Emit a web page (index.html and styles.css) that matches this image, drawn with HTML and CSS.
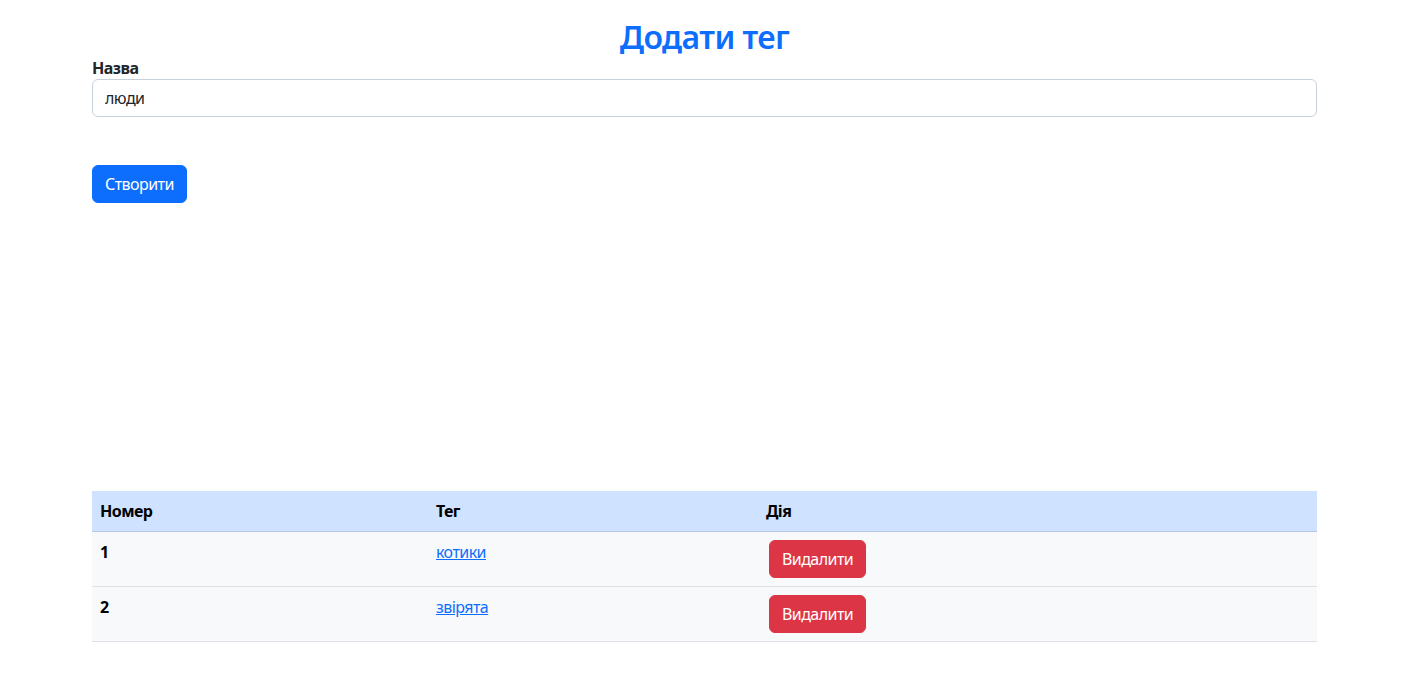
FILE: index.html
```html
<!DOCTYPE html>
<html lang="uk">
<head>
<meta charset="utf-8">
<title>Додати тег</title>
<link rel="stylesheet" href="styles.css">
</head>
<body>
<main class="container">
  <h2 class="title">Додати тег</h2>
  <form class="tag-form">
    <label class="form-label" for="name">Назва</label>
    <input class="form-control" id="name" type="text" value="люди">
    <button class="btn btn-primary" type="button">Створити</button>
  </form>
  <table class="table">
    <thead>
      <tr><th class="col-num">Номер</th><th class="col-tag">Тег</th><th>Дія</th></tr>
    </thead>
    <tbody>
      <tr><th>1</th><td><a href="#">котики</a></td><td><button class="btn btn-danger" type="button">Видалити</button></td></tr>
      <tr><th>2</th><td><a href="#">звірята</a></td><td><button class="btn btn-danger" type="button">Видалити</button></td></tr>
    </tbody>
  </table>
</main>
</body>
</html>
```
FILE: styles.css
```css
* { box-sizing: border-box; }
body {
  margin: 0;
  font-family: "Noto Sans", "Open Sans", sans-serif;
  font-size: 16px;
  line-height: 1.5;
  letter-spacing: -0.035em;
  color: #212529;
  background: #fff;
}
.container {
  width: 1225px;
  margin: 0 0 0 92px;
}
.title {
  margin: 18px 0 0;
  font-size: 32px;
  line-height: 38px;
  font-weight: 600;
  color: #0d6efd;
  text-align: center;
}
.tag-form {
  display: flex;
  flex-direction: column;
  align-items: flex-start;
}
.form-label {
  font-weight: 700;
  line-height: 24px;
  height: 23px;
}
.form-control {
  width: 100%;
  height: 38px;
  padding: 6px 12px;
  font: inherit;
  letter-spacing: inherit;
  color: #212529;
  border: 1px solid #c8d0da;
  border-radius: 6px;
  outline: none;
}
.btn {
  font: inherit;
  letter-spacing: inherit;
  height: 38px;
  padding: 6px 12px;
  border: 1px solid transparent;
  border-radius: 6px;
  color: #fff;
  line-height: 24px;
}
.btn-primary {
  margin-top: 48px;
  background: #0d6efd;
  border-color: #0d6efd;
}
.btn-danger {
  margin-left: 3px;
  background: #dc3545;
  border-color: #dc3545;
}
.table {
  width: 100%;
  margin-top: 288px;
  border-collapse: collapse;
  color: #000;
}
.table th, .table td {
  text-align: left;
  vertical-align: top;
  padding: 8px;
  line-height: 24px;
  border-bottom: 1px solid #dee2e6;
}
.table thead th {
  background: #cfe2ff;
  border-bottom-color: #b6c8e6;
}
.table tbody tr { background: #f8f9fa; }
.table tbody th { font-weight: 700; }
.col-num { width: 336px; }
.col-tag { width: 330px; }
.table a { color: #0d6efd; text-decoration: underline; }
```
